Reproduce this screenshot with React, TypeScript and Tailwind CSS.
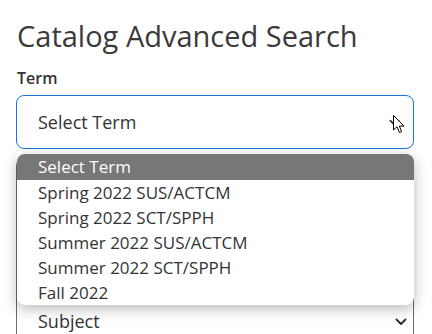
import React from "react";

const options = [
  "Spring 2022 SUS/ACTCM",
  "Spring 2022 SCT/SPPH",
  "Summer 2022 SUS/ACTCM",
  "Summer 2022 SCT/SPPH",
  "Fall 2022",
];

function Chevron({ className = "" }: { className?: string }) {
  return (
    <svg viewBox="0 0 12 8" className={className} fill="none" stroke="currentColor" strokeWidth="2" strokeLinecap="round" strokeLinejoin="round">
      <path d="M1.5 1.5 6 6l4.5-4.5" />
    </svg>
  );
}

export default function App() {
  return (
    <div
      className="relative w-[432px] h-[334px] overflow-hidden bg-white text-[#333]"
      style={{ fontFamily: '"Open Sans", "Noto Sans", sans-serif' }}
    >
      <div className="pl-4 pt-[18px]">
        <h1 className="text-[29px] leading-[36px] font-normal text-[#3a3a3a] pl-[1px]">
          Catalog Advanced Search
        </h1>
        <div className="mt-[13px] text-[16px] leading-[22px] font-semibold text-[#333] pl-[1px]">Term</div>
        <div className="relative mt-[6px] w-[398px]">
          <div className="flex h-[54px] items-center justify-between rounded-[8px] border border-[#1a73d9] bg-white pl-[21px] pr-[6px]">
            <span className="text-[18px] text-[#333]">Select Term</span>
            <div className="relative w-[14px] h-[14px]">
              <Chevron className="w-[11px] h-[8px] text-[#333] absolute left-[-4px] top-[4px]" />
              <svg viewBox="0 0 12 19" className="absolute left-[0px] top-[0px] w-[12px] h-[19px]">
                <path d="M0.5 0.5 L0.5 15 L4 11.7 L6.4 17.5 L8.6 16.6 L6.3 11 L11 11 Z" fill="#fff" stroke="#000" strokeWidth="1" strokeLinejoin="round" />
              </svg>
            </div>
          </div>
        </div>
        <div className="mt-[9px] w-[398px] h-[220px] border-x border-t border-[#6b6b6b] rounded-t-[8px] flex items-start justify-between pl-[21px] pr-[6px] pt-[150px]">
          <span className="text-[18px] leading-[24px] text-[#333]">Subject</span>
          <Chevron className="w-[12px] h-[8px] text-[#333] mt-[9px]" />
        </div>
      </div>

      <div className="absolute left-[17px] top-[154px] w-[397px] rounded-[8px] bg-white overflow-hidden shadow-[0_4px_14px_rgba(0,0,0,0.28)]">
        <div className="h-[26px] bg-[#777777] pl-[21px] text-[17px] leading-[26px] text-white">Select Term</div>
        {options.map((o) => (
          <div key={o} className="h-[25px] pl-[21px] text-[17px] leading-[25px] text-[#333]">
            {o}
          </div>
        ))}
      </div>
    </div>
  );
}
